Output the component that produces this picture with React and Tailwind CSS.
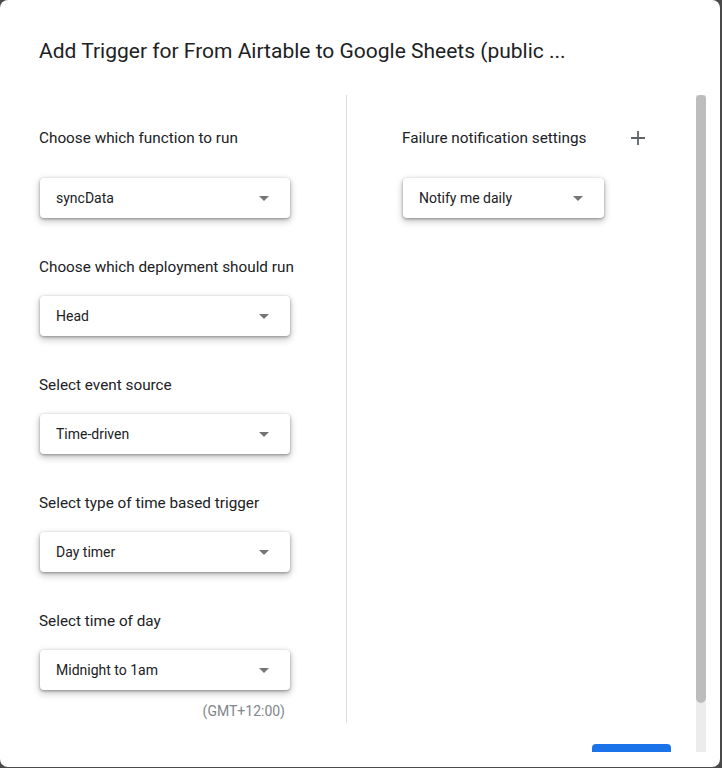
import React from "react";

function Caret() {
  return (
    <svg width="10" height="5" viewBox="0 0 10 5" className="shrink-0">
      <path d="M0 0 L10 0 L5 5 Z" fill="#757575" />
    </svg>
  );
}

function Select({ value, width = "w-[250px]" }) {
  return (
    <div
      className={`${width} ml-px h-10 bg-white rounded-[4px] flex items-center justify-between pl-4 pr-[21px] shadow-[0_1px_3px_0_rgba(0,0,0,0.35),0_3px_7px_1px_rgba(0,0,0,0.2)]`}
    >
      <span className="text-[14px] text-[#202124]">{value}</span>
      <Caret />
    </div>
  );
}

function Label({ children }) {
  return <div className="text-[15.3px] leading-5 text-[#202124]">{children}</div>;
}

export default function App() {
  return (
    <div
      className="w-[722px] h-[768px] bg-[#4a4a4a] overflow-hidden"
      style={{ fontFamily: "Roboto, 'Noto Sans', sans-serif" }}
    >
      <div className="w-[720px] h-[767px] bg-white rounded-[8px] flex flex-col overflow-hidden">
        <div className="h-[95px] shrink-0 pl-[39px] pt-[39px]">
          <h1 className="text-[21px] leading-6 font-normal text-[#202124]">
            Add Trigger for From Airtable to Google Sheets (public ...
          </h1>
        </div>
        <div className="flex h-[657px] shrink-0">
          <div className="w-[696px] overflow-hidden">
            <div className="flex">
              <div className="w-[347px] pl-[39px] pt-[33px] border-r border-[#dadce0] h-[628px]">
                <Label>Choose which function to run</Label>
                <div className="mt-[30px]">
                  <Select value="syncData" />
                </div>
                <div className="mt-[39px]">
                  <Label>Choose which deployment should run</Label>
                </div>
                <div className="mt-[19px]">
                  <Select value="Head" />
                </div>
                <div className="mt-[39px]">
                  <Label>Select event source</Label>
                </div>
                <div className="mt-[19px]">
                  <Select value="Time-driven" />
                </div>
                <div className="mt-[39px]">
                  <Label>Select type of time based trigger</Label>
                </div>
                <div className="mt-[19px]">
                  <Select value="Day timer" />
                </div>
                <div className="mt-[39px]">
                  <Label>Select time of day</Label>
                </div>
                <div className="mt-[19px]">
                  <Select value="Midnight to 1am" />
                </div>
                <div className="w-[246px] text-right text-[14px] leading-5 text-[#80868b] mt-[11px]">
                  (GMT+12:00)
                </div>
              </div>
              <div className="pl-[55px] pt-[19px]">
                <div className="flex items-center h-12 w-[260px] justify-between">
                  <Label>Failure notification settings</Label>
                  <div className="w-12 h-12 flex items-center justify-center">
                    <svg width="16" height="16" viewBox="0 0 16 16">
                      <path d="M8 1 V15 M1 8 H15" stroke="#5f6368" strokeWidth="1.8" />
                    </svg>
                  </div>
                </div>
                <div className="mt-[16px]">
                  <Select value="Notify me daily" width="w-[201px]" />
                </div>
              </div>
            </div>
            <div className="flex justify-end pr-[25px] mt-[21px]">
              <div className="w-[79px] h-9 rounded-[4px] bg-[#1a73e8]" />
            </div>
          </div>
          <div className="w-[10px] h-full bg-[#ececec] flex flex-col">
            <div className="h-[608px] bg-[#bdbdbd] rounded-b-[5px] rounded-t-[4px]" />
          </div>
        </div>
      </div>
    </div>
  );
}
